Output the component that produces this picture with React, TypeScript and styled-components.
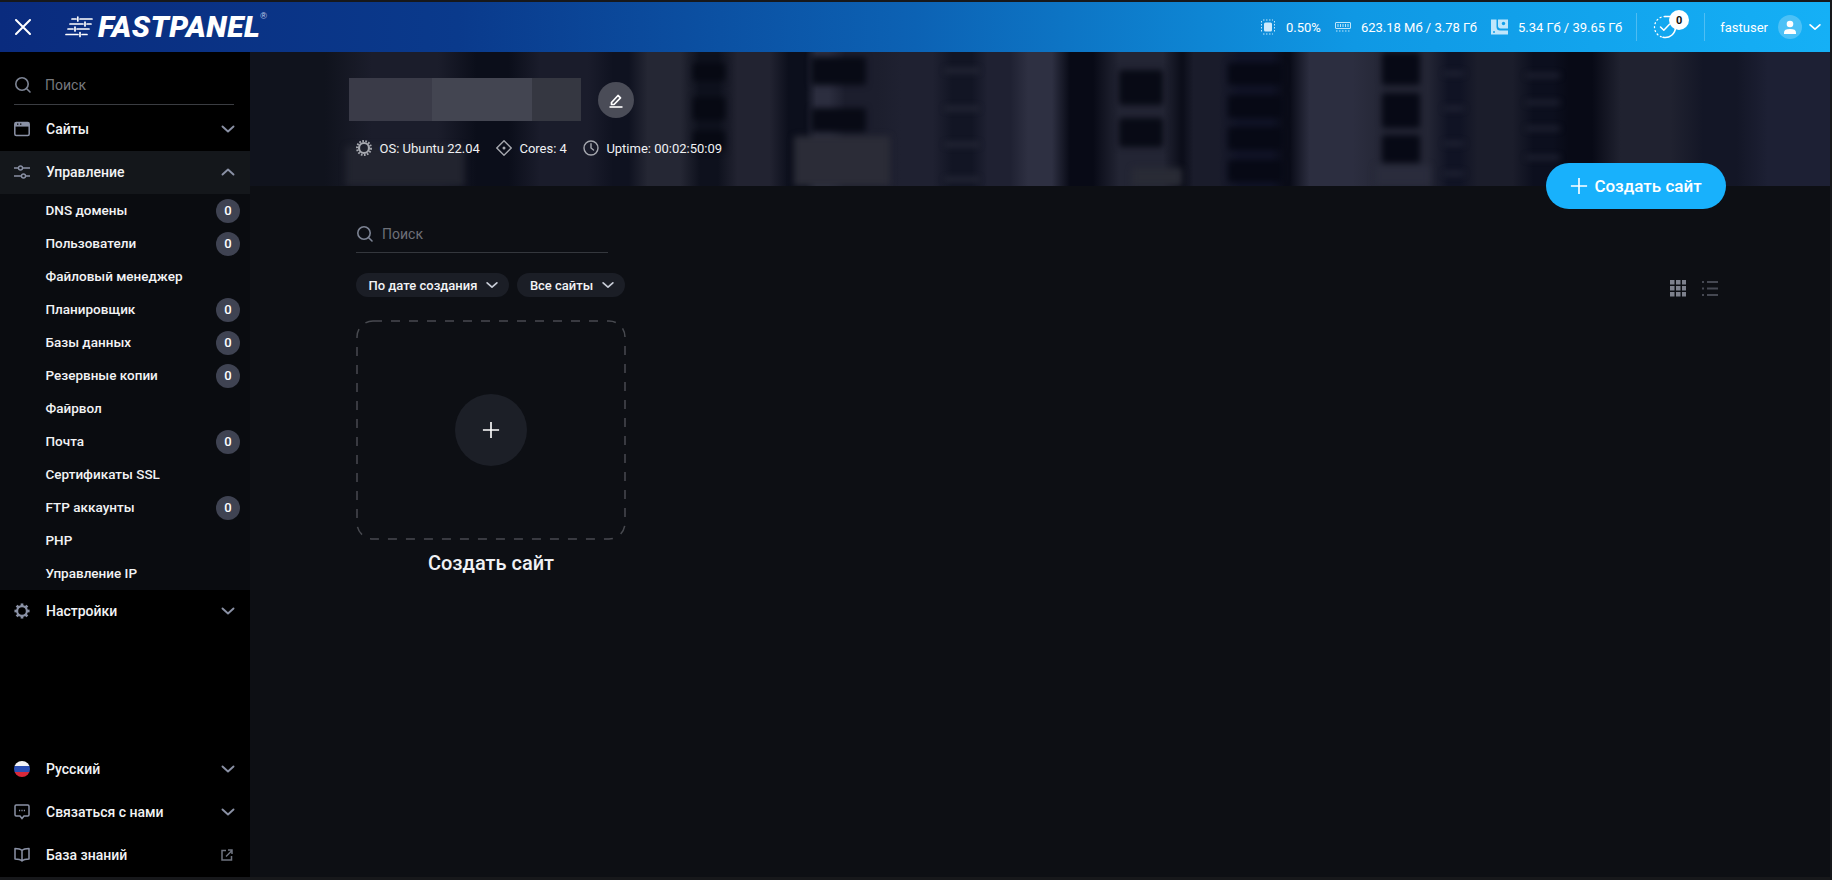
import React from "react";
import styled, { createGlobalStyle } from "styled-components";

const GlobalStyle = createGlobalStyle`
  html, body, #root { margin: 0; padding: 0; height: 100%; }
  body { background: #17181b; font-family: Roboto, "Noto Sans", sans-serif; overflow: hidden; }
  * { box-sizing: border-box; }
`;

const ICON = "#8a91a5";

// blurred server rack photo behind the title: vertical bands [x, width, colour]
const bands: [number, number, string][] = [
  [0, 96, "#10131d"], [96, 118, "#1b1d2b"], [214, 57, "#0b0e1a"], [271, 86, "#1a1c2b"],
  [357, 28, "#0f1220"], [385, 58, "#252734"], [443, 32, "#0e111d"], [475, 57, "#222331"],
  [532, 30, "#0c0f1c"], [562, 21, "#2c2e3f"], [583, 56, "#1c1e2d"], [639, 56, "#1f2131"],
  [695, 34, "#121524"], [729, 40, "#1f2132"], [769, 42, "#2e3042"], [811, 41, "#080a16"],
  [852, 78, "#232534"], [930, 4, "#0c0e1a"], [934, 44, "#1a1c2b"], [978, 55, "#101326"],
  [1033, 9, "#0a0c18"], [1043, 76, "#2c2e40"], [1119, 75, "#242635"], [1194, 20, "#101324"],
  [1214, 62, "#1b1d2b"], [1276, 34, "#0c0f1e"], [1310, 41, "#080a16"], [1351, 89, "#202230"],
  [1440, 60, "#131626"], [1500, 82, "#1d2034"],
];

const bandStops = bands
  .map(([x, w, c]) => `${c} ${x + w * 0.22}px, ${c} ${x + w * 0.78}px`)
  .join(", ");

const windows: [number, number, number, number, string][] = [
  [443, 11, 32, 18, "#070913"], [443, 45, 32, 23, "#070913"], [443, 79, 32, 20, "#070913"],
  [561, 5, 55, 28, "#080a15"], [561, 56, 55, 24, "#080a15"], [544, 84, 96, 60, "#2b2c37"],
  [869, 18, 44, 35, "#080a15"], [869, 66, 44, 29, "#080a15"], [882, 116, 50, 24, "#292b35"],
  [978, 11, 55, 22, "#070915"], [978, 43, 55, 23, "#070915"], [978, 75, 55, 23, "#070915"],
  [978, 108, 55, 22, "#070915"], [1132, 0, 38, 33, "#070915"], [1132, 41, 38, 35, "#070915"],
  [1132, 83, 38, 28, "#070915"], [1125, 113, 55, 24, "#2a2c3c"], [96, 94, 118, 50, "#22242f"],
  [695, 17, 34, 3, "#303240"], [695, 55, 34, 3, "#303240"], [695, 91, 34, 3, "#303240"], [695, 126, 34, 3, "#303240"],
  [1194, 20, 20, 3, "#2a2c3c"], [1194, 55, 20, 3, "#2a2c3c"], [1194, 90, 20, 3, "#2a2c3c"], [1194, 120, 20, 3, "#2a2c3c"],
  [1276, 22, 34, 3, "#2a2c3c"], [1276, 49, 34, 3, "#2a2c3c"], [1276, 75, 34, 3, "#2a2c3c"], [1276, 104, 34, 3, "#2a2c3c"],
];

const Frame = styled.div`
  height: 880px;
  padding: 2px 2px 3px 0;
  display: flex;
  flex-direction: column;
`;

const TopBar = styled.header`
  height: 50px;
  flex: none;
  display: flex;
  align-items: center;
  background: linear-gradient(90deg, #0a2b7e 0%, #0a3a8c 25%, #0c62b4 50%, #0f98e4 74%, #15b0f6 100%);
  color: #fff;
`;

const CloseButton = styled.button`
  width: 46px;
  height: 50px;
  border: 0;
  padding: 0;
  background: none;
  display: flex;
  align-items: center;
  justify-content: center;
`;

const Logo = styled.div`
  margin-left: 19px;
  display: flex;
  align-items: center;
  gap: 5px;
`;

const LogoText = styled.span`
  font-family: Roboto, sans-serif;
  font-weight: 900;
  font-style: italic;
  font-size: 30px;
  letter-spacing: 0.45px;
  line-height: 1;
`;

const LogoMark = styled.sup`
  font-family: "Liberation Sans", sans-serif;
  font-size: 9px;
  line-height: 1;
  color: #c4d0ea;
  align-self: flex-start;
  margin: 0 0 0 -5px;
`;

const Stats = styled.div`
  margin-left: auto;
  display: flex;
  align-items: center;
  height: 100%;
`;

const Stat = styled.div`
  display: flex;
  align-items: center;
  gap: 10px;
  margin-right: 14px;
  font-size: 13px;
  color: #fff;
  white-space: nowrap;
`;

const Divider = styled.span`
  width: 1px;
  height: 28px;
  background: rgba(255, 255, 255, 0.25);
`;

const TaskBox = styled.div`
  position: relative;
  width: 67px;
  height: 100%;
  display: flex;
  align-items: center;
  padding-left: 16px;
`;

const TaskBadge = styled.span`
  position: absolute;
  left: 32px;
  top: 8px;
  width: 20px;
  height: 20px;
  border-radius: 50%;
  background: #fff;
  color: #111;
  font-size: 11px;
  font-weight: 700;
  display: flex;
  align-items: center;
  justify-content: center;
`;

const UserBox = styled.div`
  display: flex;
  align-items: center;
  padding: 0 7px 0 15px;
  font-size: 13px;
`;

const Avatar = styled.span`
  width: 24px;
  height: 24px;
  border-radius: 50%;
  background: rgba(255, 255, 255, 0.24);
  display: flex;
  align-items: center;
  justify-content: center;
  margin: 0 5px 0 10px;
`;

const Body = styled.div`
  flex: 1;
  min-height: 0;
  display: flex;
`;

const Sidebar = styled.aside`
  width: 250px;
  flex: none;
  background: #000;
  display: flex;
  flex-direction: column;
  color: #fff;
`;

const SideSearch = styled.div`
  height: 38px;
  margin: 15px 16px 3px 14px;
  display: flex;
  align-items: center;
  gap: 13px;
  border-bottom: 1px solid #3b3d42;
  padding-bottom: 2px;
  font-size: 14px;
  color: #77797e;
`;

const NavRow = styled.div<{ $active?: boolean }>`
  height: 43px;
  display: flex;
  align-items: center;
  padding: 0 13px 1px 14px;
  font-size: 14px;
  font-weight: 500;
  color: #f2f3f5;
  background: ${(p) => (p.$active ? "#14171b" : "transparent")};
`;

const NavIcon = styled.span`
  width: 16px;
  height: 16px;
  flex: none;
  margin-right: 16px;
  display: flex;
  align-items: center;
  justify-content: center;
`;

const NavLabel = styled.span`
  flex: 1;
`;

const ExternalLink = styled.span`
  display: flex;
  margin-right: 4px;
`;

const SubList = styled.div`
  background: #0a0c10;
`;

const SubRow = styled.div`
  height: 33px;
  display: flex;
  align-items: center;
  justify-content: space-between;
  padding: 0 10px 0 45.5px;
  font-size: 13.5px;
  font-weight: 500;
  color: #f2f3f5;
`;

const SubText = styled.span`
  position: relative;
  top: -1px;
`;

const CountBadge = styled.span`
  width: 24px;
  height: 24px;
  border-radius: 50%;
  background: #3f4352;
  color: #fff;
  font-size: 13px;
  font-weight: 500;
  display: flex;
  align-items: center;
  justify-content: center;
`;

const SideFooter = styled.div`
  margin-top: auto;
`;

const Flag = styled.span`
  width: 16px;
  height: 16px;
  border-radius: 50%;
  background: linear-gradient(#f4f4f6 0 33%, #2b4fb4 33% 66%, #d8283a 66%);
`;

const Main = styled.main`
  flex: 1;
  min-width: 0;
  background: #0d0f14;
  overflow: hidden;
`;

const Hero = styled.section`
  position: relative;
  height: 134px;
  padding: 26px 0 0 99px;
  color: #fff;
`;

const HeroBackdrop = styled.div`
  position: absolute;
  inset: 0;
  overflow: hidden;
  background: linear-gradient(90deg, ${bandStops});
`;

const HeroArt = styled.svg`
  display: block;
  filter: blur(3px);
`;

const HeroInner = styled.div`
  position: relative;
`;

const NameRow = styled.div`
  display: flex;
  align-items: center;
  gap: 17px;
`;

const NamePlate = styled.div`
  display: flex;
  height: 43px;
`;

const NameCell = styled.span<{ $w: number; $c: string }>`
  width: ${(p) => p.$w}px;
  background: ${(p) => p.$c};
`;

const EditButton = styled.button`
  width: 36px;
  height: 36px;
  border-radius: 50%;
  border: 0;
  padding: 0;
  background: #4a4c57;
  display: flex;
  align-items: center;
  justify-content: center;
`;

const MetaRow = styled.div`
  display: flex;
  align-items: center;
  margin: 19px 0 0 7px;
  font-size: 13px;
`;

const MetaItem = styled.span`
  display: flex;
  align-items: center;
  gap: 7.5px;
  margin-right: 16px;
  white-space: nowrap;
  color: #f0f1f4;
`;

const CreateButton = styled.button`
  position: absolute;
  right: 104px;
  bottom: -23px;
  width: 180px;
  height: 46px;
  border: 0;
  border-radius: 23px;
  background: #18b1fc;
  color: #fff;
  font-family: inherit;
  font-size: 17px;
  font-weight: 500;
  display: flex;
  align-items: center;
  justify-content: center;
  gap: 6px;
`;

const Content = styled.div`
  padding: 30px 112px 0 106px;
`;

const SearchField = styled.div`
  width: 252px;
  height: 37px;
  display: flex;
  align-items: center;
  gap: 8px;
  border-bottom: 1px solid #34373d;
  font-size: 14px;
  color: #6d7078;
`;

const Toolbar = styled.div`
  margin-top: 20px;
  display: flex;
  align-items: center;
  gap: 8px;
`;

const Chip = styled.button`
  height: 24px;
  border: 0;
  border-radius: 12px;
  padding: 0 9px 0 12.5px;
  background: #1b1e26;
  color: #f2f3f5;
  font-family: inherit;
  font-size: 13px;
  font-weight: 500;
  display: flex;
  align-items: center;
  gap: 7px;
`;

const ViewToggle = styled.div`
  margin-left: auto;
  display: flex;
  gap: 16px;
  position: relative;
  top: 3px;
`;

const AddCard = styled.div`
  position: relative;
  margin-top: 23px;
  width: 270px;
  height: 220px;
  display: flex;
  align-items: center;
  justify-content: center;
`;

const DashedOutline = styled.svg`
  position: absolute;
  inset: 0;
`;

const AddCircle = styled.span`
  position: relative;
  width: 72px;
  height: 72px;
  border-radius: 50%;
  background: #1c1f27;
  display: flex;
  align-items: center;
  justify-content: center;
`;

const AddLabel = styled.div`
  width: 270px;
  margin-top: 11px;
  text-align: center;
  color: #f0f1f4;
  font-size: 20px;
  font-weight: 500;
  line-height: 24px;
`;

const Chevron = ({ up, color = ICON, size = 18 }: { up?: boolean; color?: string; size?: number }) => (
  <svg width={size} height={size} viewBox="0 0 18 18" fill="none" stroke={color} strokeWidth="1.9" strokeLinecap="round" strokeLinejoin="round">
    <path d={up ? "M3.5 11.5 9 6.500l5.500 5" : "M3.5 6.500l5.500 5 5.500-5"} />
  </svg>
);

const Search = ({ color = "#7d8494" }: { color?: string }) => (
  <svg width="18" height="18" viewBox="0 0 18 18" fill="none" stroke={color} strokeWidth="1.6" strokeLinecap="round">
    <circle cx="8" cy="8" r="6.2" />
    <path d="M12.7 12.7 16 16" />
  </svg>
);

const Plus = ({ size }: { size: number }) => (
  <svg width={size} height={size} viewBox="0 0 20 20" stroke="#fff" strokeWidth="1.8">
    <path d="M10 1v18M1 10h18" />
  </svg>
);

const SitesIcon = () => (
  <svg width="16" height="16" viewBox="0 0 16 16" fill="none">
    <rect x=".8" y="1.5" width="14.4" height="13" rx="1.5" stroke={ICON} strokeWidth="1.5" />
    <path d="M1 2h14v3.600H1z" fill={ICON} />
    <path d="M3 3.200h1.400M6 3.200h1.400" stroke="#000" strokeWidth="1.3" />
  </svg>
);

const SlidersIcon = () => (
  <svg width="16" height="14" viewBox="0 0 16 14" fill="none" stroke={ICON} strokeWidth="1.4">
    <path d="M0 3h4M9 3h7M0 11h7M12 11h4" />
    <circle cx="6.5" cy="3" r="2" />
    <circle cx="9.5" cy="11" r="2" />
  </svg>
);

const CogIcon = () => (
  <svg width="18" height="18" viewBox="0 0 18 18" fill="none" stroke={ICON}>
    <circle cx="9" cy="9" r="5.5" strokeWidth="2.4" />
    {[0, 45, 90, 135, 180, 225, 270, 315].map((a) => (
      <path key={a} d="M9 .5v3" strokeWidth="3" transform={`rotate(${a} 9 9)`} />
    ))}
  </svg>
);

const ChatIcon = () => (
  <svg width="16" height="16" viewBox="0 0 16 16" fill="none">
    <path d="M2.2 1h11.600c.7 0 1.200.5 1.200 1.200v8.600c0 .7-.5 1.200-1.200 1.200H10l-2 2.500L6 12H2.200C1.500 12 1 11.500 1 10.800V2.200C1 1.500 1.500 1 2.200 1z" stroke={ICON} strokeWidth="1.5" />
    <path d="M5 6.500h1.200M7.400 6.500h1.200M9.800 6.500H11" stroke={ICON} strokeWidth="1.5" />
  </svg>
);

const BookIcon = () => (
  <svg width="16" height="16" viewBox="0 0 16 16" fill="none" stroke={ICON} strokeWidth="1.5" strokeLinejoin="round">
    <path d="M8 3.500C6.500 2 4 1.500 1 1.500v10.500c3 0 5.500.5 7 2 1.500-1.500 4-2 7-2V1.500c-3 0-5.500.5-7 2zM8 3.500V14" />
  </svg>
);

const ExternalIcon = () => (
  <svg width="12" height="12" viewBox="0 0 12 12" fill="none" stroke="#6f7480" strokeWidth="1.5">
    <path d="M5 1.500H1v9.500h9.500V7" />
    <path d="M5 7.500 10.500 2M7 1h4v4" />
  </svg>
);

const CloseIcon = () => (
  <svg width="16" height="16" viewBox="0 0 16 16" stroke="#fff" strokeWidth="2" strokeLinecap="round">
    <path d="M1 1l14 14M15 1 1 15" />
  </svg>
);

const LogoIcon = () => (
  <svg width="28" height="22" viewBox="0 0 28 22" stroke="#fff" strokeWidth="1.7" fill="none" strokeLinecap="round">
    <path d="M7 3h4M15 3h12M12.800 1v4" />
    <path d="M5 8h13M22 8h4M20 6v4" />
    <path d="M3 13h5M12 13h12M10 11v4" />
    <path d="M1 18.500h12M17 18.500h5M15 16.500v4" />
  </svg>
);

const ChipIcon = () => (
  <svg width="16" height="16" viewBox="0 0 16 16" fill="none">
    <rect x="4" y="3.5" width="8" height="9" rx="1.5" fill="#cfeafc" />
    <path d="M1.500 2v12M14.500 2v12M3 1h10M3 15h10" stroke="#bfe6fb" strokeWidth="1" strokeDasharray="1.5 1.5" />
  </svg>
);

const RamIcon = () => (
  <svg width="16" height="12" viewBox="0 0 16 12" fill="none" stroke="#bfe6fb">
    <rect x=".5" y="1.5" width="15" height="6" rx=".5" />
    <path d="M3 3v3M5.500 3v3M8 3v3M10.500 3v3M13 3v3" />
    <path d="M1 10h14" strokeDasharray="1.5 1.5" />
  </svg>
);

const DiskIcon = () => (
  <svg width="17" height="16" viewBox="0 0 17 16">
    <path d="M0 .5h5.500V8c0 2.500 1.500 3.500 3.500 3.500h8v4H0z" fill="#bfe6fb" />
    <path d="M7 .5h10V9.500H9.500C8 9.500 7 8.500 7 7z" fill="#bfe6fb" />
    <circle cx="12.5" cy="4.5" r="1.7" fill="#14a0ea" />
    <circle cx="3" cy="13" r="1" fill="#14a0ea" />
  </svg>
);

const TaskIcon = () => (
  <svg width="24" height="24" viewBox="0 0 24 24" fill="none" stroke="#fff" strokeWidth="1.3" strokeLinecap="round" strokeLinejoin="round">
    <path d="M12 1.500a10.500 10.500 0 0 0-10.500 10.500 10.500 10.500 0 0 0 8 10.200" strokeDasharray="1 3" />
    <path d="M10 22.300c6.500 1.500 12.500-3.500 12.500-10.300" strokeWidth="1.5" />
    <path d="M7.500 12l3.300 3.300 5.700-6" strokeWidth="1.5" />
    <path d="M12 1.500h5" />
  </svg>
);

const UserIcon = () => (
  <svg width="14" height="14" viewBox="0 0 14 14" fill="#fff">
    <circle cx="7" cy="4" r="3.3" />
    <path d="M1 14v-1.500C1 10 3 9 7 9s6 1 6 3.500V14z" />
  </svg>
);

const PenIcon = () => (
  <svg width="16" height="16" viewBox="0 0 16 16" fill="none">
    <path d="M3.500 10.500 10 3.500l2.500 2.300L6 12.500H3.500z" stroke="#fff" strokeWidth="1.7" strokeLinejoin="round" />
    <path d="M1.500 15h13" stroke="#fff" strokeWidth="1.6" />
  </svg>
);

const GearIcon = () => (
  <svg width="16" height="16" viewBox="0 0 16 16" fill="none" stroke="#a6a8af">
    <circle cx="8" cy="8" r="5" strokeWidth="2.2" />
    <circle cx="8" cy="8" r="7" strokeWidth="2" strokeDasharray="1.7 1.4" />
  </svg>
);

const DiamondIcon = () => (
  <svg width="16" height="16" viewBox="0 0 16 16" fill="none" stroke="#a6a8af" strokeWidth="1.4">
    <path d="M8 .8 15.200 8 8 15.200.8 8z" />
    <circle cx="8" cy="8" r="1.5" fill="#a6a8af" stroke="none" />
  </svg>
);

const ClockIcon = () => (
  <svg width="16" height="16" viewBox="0 0 16 16" fill="none" stroke="#a6a8af" strokeWidth="1.4" strokeLinecap="round">
    <circle cx="8" cy="8" r="7" />
    <path d="M8 3.800V8l2.500 2" />
  </svg>
);

const GridIcon = () => (
  <svg width="16" height="17" viewBox="0 0 16 17" fill="#7d818d">
    {[0, 6, 12].flatMap((y) =>
      [0, 6, 12].map((x) => <rect key={`${x}-${y}`} x={x} y={y} width="4.5" height="4.5" />)
    )}
  </svg>
);

const ListIcon = () => (
  <svg width="16" height="17" viewBox="0 0 16 17" stroke="#454852" strokeWidth="2">
    <path d="M0 2h2M5 2h11M0 8.500h2M5 8.500h11M0 15h2M5 15h11" />
  </svg>
);

const HeroPicture = () => (
  <HeroBackdrop>
    <HeroArt width="1580" height="134">
      {windows.map(([x, y, w, h, c]) => (
        <rect key={`${x}-${y}`} x={x} y={y} width={w} height={h} fill={c} rx={2} />
      ))}
    </HeroArt>
  </HeroBackdrop>
);

const manageItems: [string, boolean][] = [
  ["DNS домены", true],
  ["Пользователи", true],
  ["Файловый менеджер", false],
  ["Планировщик", true],
  ["Базы данных", true],
  ["Резервные копии", true],
  ["Файрвол", false],
  ["Почта", true],
  ["Сертификаты SSL", false],
  ["FTP аккаунты", true],
  ["PHP", false],
  ["Управление IP", false],
];

export default function App() {
  return (
    <Frame>
      <GlobalStyle />
      <TopBar>
        <CloseButton>
          <CloseIcon />
        </CloseButton>
        <Logo>
          <LogoIcon />
          <LogoText>FASTPANEL</LogoText>
          <LogoMark>®</LogoMark>
        </Logo>
        <Stats>
          <Stat>
            <ChipIcon />
            0.50%
          </Stat>
          <Stat>
            <RamIcon />
            623.18 Мб / 3.78 Гб
          </Stat>
          <Stat>
            <DiskIcon />
            5.34 Гб / 39.65 Гб
          </Stat>
          <Divider />
          <TaskBox>
            <TaskIcon />
            <TaskBadge>0</TaskBadge>
          </TaskBox>
          <Divider />
          <UserBox>
            fastuser
            <Avatar>
              <UserIcon />
            </Avatar>
            <Chevron color="#fff" size={16} />
          </UserBox>
        </Stats>
      </TopBar>
      <Body>
        <Sidebar>
          <SideSearch>
            <Search />
            Поиск
          </SideSearch>
          <NavRow>
            <NavIcon>
              <SitesIcon />
            </NavIcon>
            <NavLabel>Сайты</NavLabel>
            <Chevron />
          </NavRow>
          <NavRow $active>
            <NavIcon>
              <SlidersIcon />
            </NavIcon>
            <NavLabel>Управление</NavLabel>
            <Chevron up />
          </NavRow>
          <SubList>
            {manageItems.map(([label, counted]) => (
              <SubRow key={label}>
                <SubText>{label}</SubText>
                {counted && <CountBadge>0</CountBadge>}
              </SubRow>
            ))}
          </SubList>
          <NavRow>
            <NavIcon>
              <CogIcon />
            </NavIcon>
            <NavLabel>Настройки</NavLabel>
            <Chevron />
          </NavRow>
          <SideFooter>
            <NavRow>
              <NavIcon>
                <Flag />
              </NavIcon>
              <NavLabel>Русский</NavLabel>
              <Chevron />
            </NavRow>
            <NavRow>
              <NavIcon>
                <ChatIcon />
              </NavIcon>
              <NavLabel>Связаться с нами</NavLabel>
              <Chevron />
            </NavRow>
            <NavRow>
              <NavIcon>
                <BookIcon />
              </NavIcon>
              <NavLabel>База знаний</NavLabel>
              <ExternalLink>
                <ExternalIcon />
              </ExternalLink>
            </NavRow>
          </SideFooter>
        </Sidebar>
        <Main>
          <Hero>
            <HeroPicture />
            <HeroInner>
              <NameRow>
                <NamePlate>
                  <NameCell $w={83} $c="#3a3b48" />
                  <NameCell $w={100} $c="#434551" />
                  <NameCell $w={49} $c="#353741" />
                </NamePlate>
                <EditButton>
                  <PenIcon />
                </EditButton>
              </NameRow>
              <MetaRow>
                <MetaItem>
                  <GearIcon />
                  OS: Ubuntu 22.04
                </MetaItem>
                <MetaItem>
                  <DiamondIcon />
                  Cores: 4
                </MetaItem>
                <MetaItem>
                  <ClockIcon />
                  Uptime: 00:02:50:09
                </MetaItem>
              </MetaRow>
            </HeroInner>
            <CreateButton>
              <Plus size={18} />
              Создать сайт
            </CreateButton>
          </Hero>
          <Content>
            <SearchField>
              <Search />
              Поиск
            </SearchField>
            <Toolbar>
              <Chip>
                По дате создания
                <Chevron color="#c8ccd6" size={16} />
              </Chip>
              <Chip>
                Все сайты
                <Chevron color="#c8ccd6" size={16} />
              </Chip>
              <ViewToggle>
                <GridIcon />
                <ListIcon />
              </ViewToggle>
            </Toolbar>
            <AddCard>
              <DashedOutline width="270" height="220" fill="none">
                <rect x="1" y="1" width="268" height="218" rx="16" stroke="#484a50" strokeWidth="1.5" strokeDasharray="9 9" />
              </DashedOutline>
              <AddCircle>
                <Plus size={18} />
              </AddCircle>
            </AddCard>
            <AddLabel>Создать сайт</AddLabel>
          </Content>
        </Main>
      </Body>
    </Frame>
  );
}
